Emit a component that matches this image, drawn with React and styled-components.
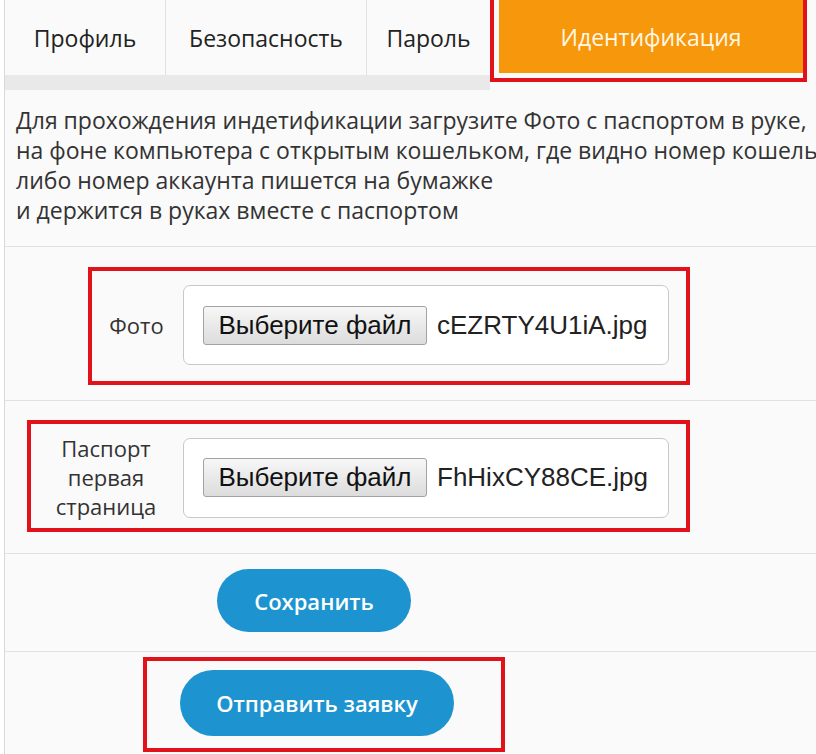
import styled, { createGlobalStyle } from "styled-components"

const GlobalStyle = createGlobalStyle`
    body {
        margin: 0;
        background: #fff;
        font-family: "Open Sans", "Liberation Sans", sans-serif;
        overflow: hidden;
    }
`

const Page = styled.div`
    width: 900px;
    margin-left: 4px;
    border-left: 1px solid #d9d9d9;
    background: #fafafa;
    min-height: 754px;
`

const TabBar = styled.div`
    display: flex;
    align-items: flex-start;
    height: 90px;
`

const TabList = styled.div`
    display: flex;
    border-bottom: 15px solid #e9e9e9;
`

const Tab = styled.div`
    height: 75px;
    display: flex;
    align-items: center;
    justify-content: center;
    width: ${props => props.$width}px;
    box-sizing: border-box;
    border-right: ${props => props.$last ? "none" : "1px solid #e2e2e2"};
    font-size: 23px;
    color: #222;
`

const Highlight = styled.div`
    display: flex;
    align-items: center;
    border: 4px solid #e2121b;
    padding: ${props => props.$pad};
    margin-top: ${props => props.$top || 0}px;
`

const ActiveTab = styled.div`
    width: 304px;
    height: 73px;
    background: #f7970b;
    color: #fff8e6;
    font-size: 23px;
    display: flex;
    align-items: center;
    justify-content: center;
`

const Section = styled.div`
    display: flex;
    border-top: ${props => props.$first ? "none" : "1px solid #e1e1e1"};
    padding: ${props => props.$pad};
`

const Description = styled.div`
    font-size: 23px;
    line-height: 30px;
    color: #333;
    white-space: nowrap;
`

const Label = styled.div`
    width: ${props => props.$width}px;
    margin-right: 18px;
    text-align: center;
    font-size: 22px;
    line-height: 29px;
    color: #333;
`

const FileField = styled.div`
    width: 486px;
    height: 80px;
    box-sizing: border-box;
    display: flex;
    align-items: center;
    padding: 0 19px;
    border: 1px solid #c8c8c8;
    border-radius: 7px;
    background: #fff;
    font-family: "Liberation Sans", Arial, sans-serif;
`

const FileButton = styled.div`
    width: 224px;
    height: 39px;
    box-sizing: border-box;
    display: flex;
    align-items: center;
    justify-content: center;
    border: 1px solid #a2a2a2;
    border-radius: 3px;
    background: linear-gradient(#f7f7f7, #dcdcdc);
    font-size: 26px;
    color: #111;
`

const FileName = styled.span`
    margin-left: 10px;
    font-size: 26px;
    color: #222;
`

const PillButton = styled.button`
    width: ${props => props.$width}px;
    height: ${props => props.$height}px;
    border: none;
    border-radius: 34px;
    background: #1d93cf;
    color: #fff;
    font-family: "Open Sans", sans-serif;
    font-weight: 600;
    font-size: 22px;
    cursor: pointer;
`

function FileRow({ label, labelWidth, fileName, pad, boxPad }) {
    return (
        <Section $pad={pad}>
            <Highlight $pad={boxPad}>
                <Label $width={labelWidth}>{label}</Label>
                <FileField>
                    <FileButton>Выберите файл</FileButton>
                    <FileName>{fileName}</FileName>
                </FileField>
            </Highlight>
        </Section>
    )
}

export default function App() {
    return (
        <Page>
            <GlobalStyle />
            <TabBar>
                <TabList>
                    <Tab $width={161}>Профиль</Tab>
                    <Tab $width={201}>Безопасность</Tab>
                    <Tab $width={123} $last>Пароль</Tab>
                </TabList>
                <Highlight $pad="0 0 5px 5px" $top={-4}>
                    <ActiveTab>Идентификация</ActiveTab>
                </Highlight>
            </TabBar>

            <Section $first $pad="15px 0 21px 11px">
                <Description>
                    Для прохождения индетификации загрузите Фото с паспортом в руке,<br />
                    на фоне компьютера с открытым кошельком, где видно номер кошелька<br />
                    либо номер аккаунта пишется на бумажке<br />
                    и держится в руках вместе с паспортом
                </Description>
            </Section>

            <FileRow
                label="Фото"
                labelWidth={57}
                fileName="cEZRTY4U1iA.jpg"
                pad="20px 0 15px 83px"
                boxPad="14px 17px 16px 16px"
            />
            <FileRow
                label={<>Паспорт<br />первая<br />страница</>}
                labelWidth={118}
                fileName="FhHixCY88CE.jpg"
                pad="19px 0 21px 22px"
                boxPad="10px 17px 7px 16px"
            />

            <Section $pad="15px 0 19px 212px">
                <PillButton $width={194} $height={63}>Сохранить</PillButton>
            </Section>

            <Section $pad="5px 0 0 138px">
                <Highlight $pad="9px 47px 12px 33px">
                    <PillButton $width={274} $height={66}>Отправить заявку</PillButton>
                </Highlight>
            </Section>
        </Page>
    )
}
